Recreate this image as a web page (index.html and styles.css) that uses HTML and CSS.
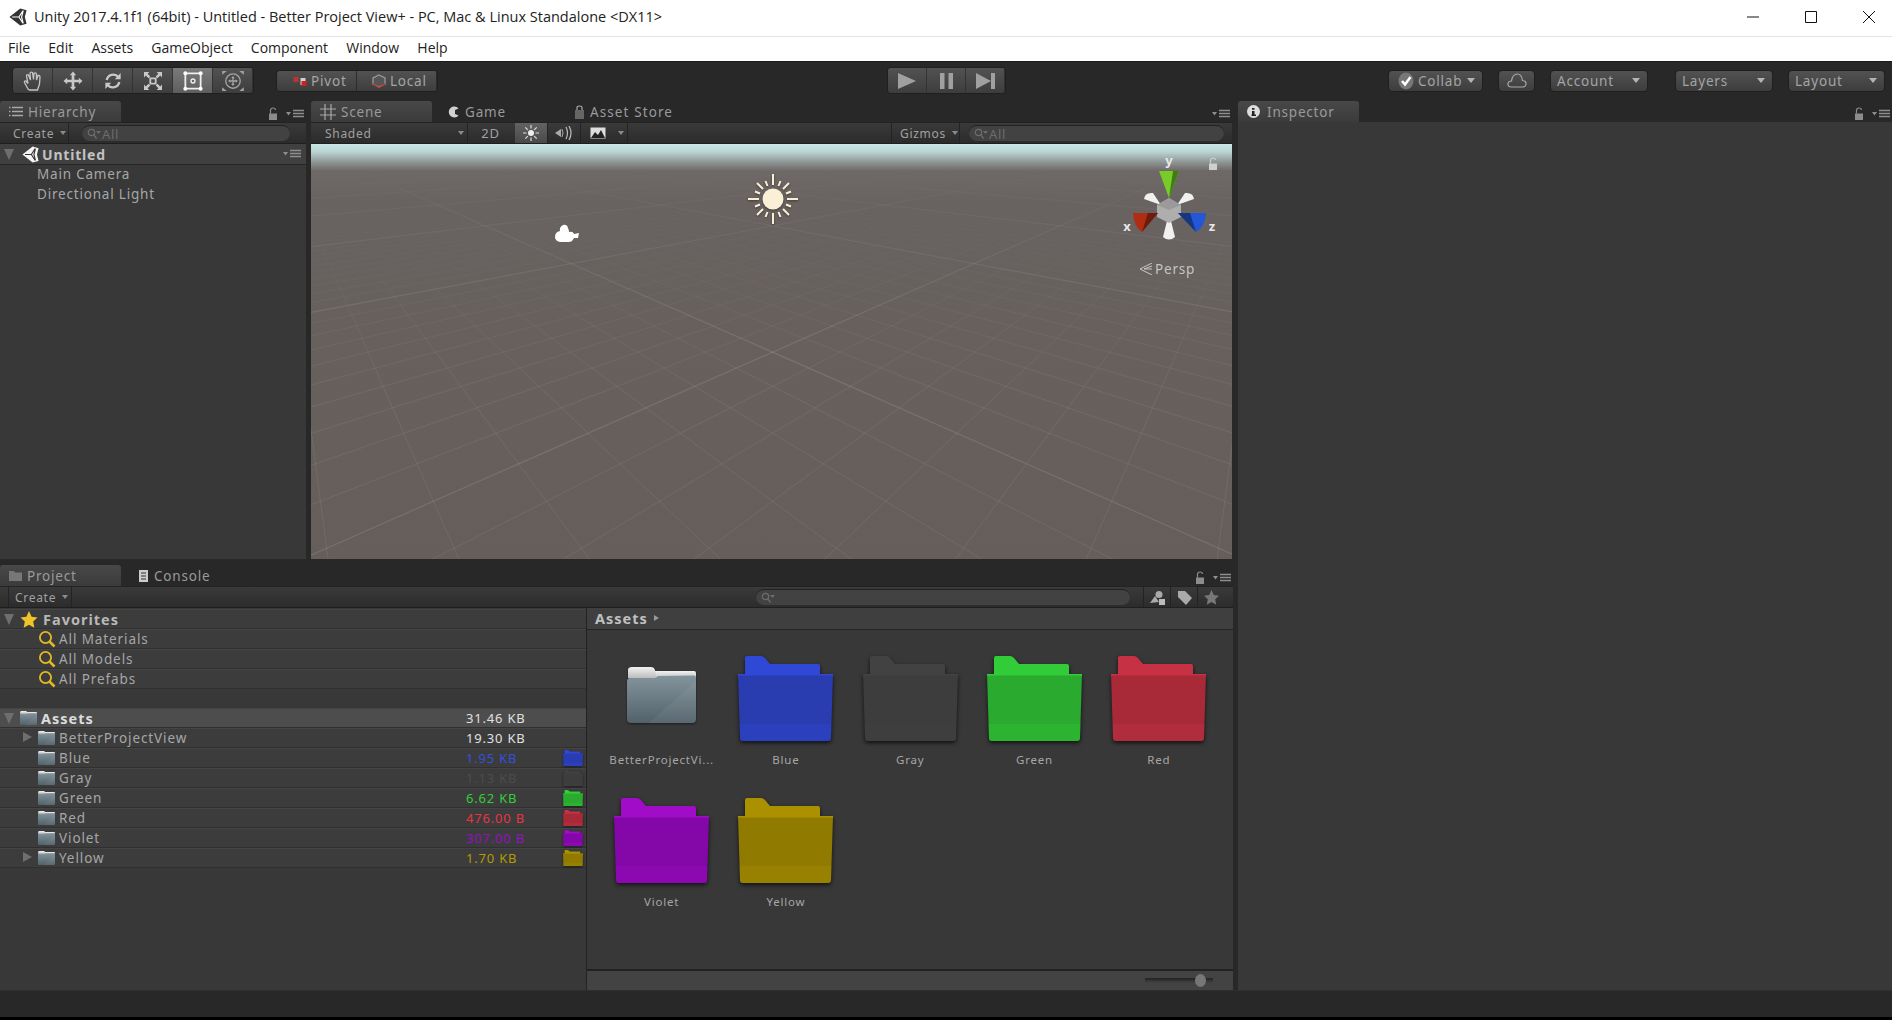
FILE: index.html
```html
<!DOCTYPE html>
<html lang="en">
<head>
    <meta charset="UTF-8">
    <title>Unity 2017.4.1f1 (64bit) - Untitled - Better Project View+</title>
    <link rel="stylesheet" href="styles.css">
</head>
<body>
    <svg class="defs" width="0" height="0">
        <symbol id="unity" viewBox="0 0 20 20">
            <path d="M12.5 0.5 19.5 2.5 17.6 10 19.5 17.5 12.5 19.5 0.5 10z" fill="currentColor"/>
            <path d="M3.5 10H11L15.5 3M11 10l4.5 7M15.8 3 14 10l1.8 7" fill="none" stroke="var(--cut)" stroke-width="1.3"/>
        </symbol>
        <symbol id="folder" viewBox="0 0 95 85" preserveAspectRatio="none">
            <path d="M7 2q0-2 2-2h14q2 0 4 2l5 6h48q2 0 2 2v12H7z" fill="var(--tab)"/>
            <path d="M0 18h95l-2 64q0 3-3 3H5q-3 0-3-3z" fill="currentColor"/>
            <path d="M0 18h95v1.500H0z" fill="var(--tab)"/>
            <path d="M1.600 68h91.800l-.4 14q0 3-3 3H5q-3 0-3-3z" fill="var(--tab)" opacity=".3"/>
        </symbol>
        <linearGradient id="greyBody" x1="0" y1="0" x2="0" y2="1">
            <stop offset="0" stop-color="#84949c"/>
            <stop offset="1" stop-color="#52626a"/>
        </linearGradient>
        <linearGradient id="greyTab" x1="0" y1="0" x2="0" y2="1">
            <stop offset="0" stop-color="#f2f2f2"/>
            <stop offset="1" stop-color="#bcbcbc"/>
        </linearGradient>
        <symbol id="greyfolder" viewBox="0 0 69 56">
            <path d="M2 4h65q2 0 2 2v6H2z" fill="url(#greyTab)"/>
            <path d="M1 3q0-3 4-3h19q3 0 4 3l1 5q0 3-3 3H1z" fill="url(#greyTab)"/>
            <path d="M0 14q0-2 2-3h25q2 0 4-2l36-.4q2 0 2 3V52q0 4-4 4H4q-4 0-4-4z" fill="url(#greyBody)"/>
            <path d="M22 56 69 14v38q0 4-4 4z" fill="#fff" opacity=".05"/>
        </symbol>
        <symbol id="lens" viewBox="0 0 18 18">
            <circle cx="7.500" cy="7.500" r="5.600" fill="none" stroke="#e4bb24" stroke-width="1.800"/>
            <path d="M11.600 11.600 16.500 16.500" stroke="#e4bb24" stroke-width="2.600"/>
        </symbol>
        <symbol id="lock" viewBox="0 0 10 14">
            <path d="M1 6.500h8V13H1z" fill="currentColor"/>
            <path d="M2.500 6.500V3.500Q2.500 1 5 1t2.500 2" fill="none" stroke="currentColor" stroke-width="1.200"/>
        </symbol>
        <symbol id="panelmenu" viewBox="0 0 18 10">
            <path d="M0 3h5L2.500 6.500z" fill="currentColor"/>
            <path d="M7 1.500h11M7 4.500h11M7 7.500h11" stroke="currentColor" stroke-width="1.600"/>
        </symbol>
        <symbol id="glass" viewBox="0 0 14 12">
            <circle cx="4.500" cy="4.500" r="3.200" fill="none" stroke="currentColor" stroke-width="1.200"/>
            <path d="M6.800 6.800 9.500 10.500" stroke="currentColor" stroke-width="1.400"/>
            <path d="M9 3h5l-2.500 3z" fill="currentColor"/>
        </symbol>
    </svg>

    <header class="titlebar">
        <svg class="title-logo"><use href="#unity"/></svg>
        <span class="title-text">Unity 2017.4.1f1 (64bit) - Untitled - Better Project View+ - PC, Mac &amp; Linux Standalone &lt;DX11&gt;</span>
        <div class="win-btns">
            <svg width="12" height="12" viewBox="0 0 12 12"><path d="M0 6h12" stroke="#111"/></svg>
            <svg width="12" height="12" viewBox="0 0 12 12"><path d="M.5.500h11v11H.5z" fill="none" stroke="#111"/></svg>
            <svg width="12" height="12" viewBox="0 0 12 12"><path d="M0 0l12 12M12 0 0 12" stroke="#111"/></svg>
        </div>
    </header>

    <nav class="menubar">
        <span>File</span><span>Edit</span><span>Assets</span><span>GameObject</span><span>Component</span><span>Window</span><span>Help</span>
    </nav>

    <div class="toolbar">
        <div class="btn-group tools">
            <button class="tool"><svg width="24" height="24" viewBox="0 0 24 24"><path d="M7 20 3.500 13.500Q3 11.500 5 12l2 2.500L5.500 7Q5.500 5 7.300 5.800L9.500 11 9 4.500Q9.500 2.500 11.500 3.500L12.500 10.500 13 4.500Q14.500 3 15.500 5L15.500 11 17 6.500Q18.800 6 19 8L18.500 15 16.500 21H8.500z" fill="none" stroke="#c4c4c4" stroke-width="1.300"/></svg></button>
            <button class="tool"><svg width="24" height="24" viewBox="0 0 24 24"><path d="M12 1.500 15.500 5.500H13.500V10.500H18.500V8.500L22.500 12 18.500 15.500V13.500H13.500V18.500H15.500L12 22.500 8.500 18.500H10.500V13.500H5.500V15.500L1.500 12 5.500 8.500V10.500H10.500V5.500H8.500z" fill="#c8c8c8"/></svg></button>
            <button class="tool"><svg width="24" height="24" viewBox="0 0 24 24"><path d="M5 11A7.500 7.500 0 0 1 18 7.500M19 13A7.500 7.500 0 0 1 6 16.500" fill="none" stroke="#c8c8c8" stroke-width="2.600"/><path d="M20.500 3V10H14zM3.500 21V14H10z" fill="#c8c8c8"/></svg></button>
            <button class="tool"><svg width="24" height="24" viewBox="0 0 24 24"><path d="M9 9h6v6H9z" fill="none" stroke="#c8c8c8" stroke-width="2"/><path d="M2 2h6L6 4l3 3-2 2-3-3-2 2zM22 2v6l-2-2-3 3-2-2 3-3-2-2zM2 22v-6l2 2 3-3 2 2-3 3 2 2zM22 22h-6l2-2-3-3 2-2 3 3 2-2z" fill="#c8c8c8"/></svg></button>
            <button class="tool tool-on"><svg width="24" height="24" viewBox="0 0 24 24"><path d="M3.500 3.500h17v17h-17z" fill="none" stroke="#eee" stroke-width="2"/><circle cx="3.500" cy="3.500" r="2.200" fill="#fff"/><circle cx="20.500" cy="3.500" r="2.200" fill="#fff"/><circle cx="3.500" cy="20.500" r="2.200" fill="#fff"/><circle cx="20.500" cy="20.500" r="2.200" fill="#fff"/><circle cx="12" cy="12" r="2.200" fill="none" stroke="#eee" stroke-width="1.500"/></svg></button>
            <button class="tool"><svg width="26" height="24" viewBox="0 0 26 24"><circle cx="13" cy="12" r="8" fill="none" stroke="#a4a4a4" stroke-width="1.500"/><path d="M13 6.500 15 9h-1.300v2.300H16V10l2.500 2-2.500 2v-1.300h-2.300V15H15l-2 2.500L11 15h1.300v-2.300H10V14l-2.500-2L10 10v1.300h2.300V9H11z" fill="#a4a4a4"/><path d="M1 1h5L1 5zM25 1h-5l5 4zM1 23h5l-5-4zM25 23h-5l5-4z" fill="#a4a4a4"/></svg></button>
        </div>
        <div class="btn-group pivot">
            <button class="pill"><svg width="15" height="12" viewBox="0 0 14 12"><path d="M1 2h5v5H1z" fill="#b33"/><path d="M8 3h5v7H8z" fill="#d0d0d0"/><path d="M9 6h5v5H9z" fill="#c22"/></svg>Pivot</button>
            <button class="pill"><svg width="14" height="14" viewBox="0 0 14 14"><path d="M7 1 13 4v6l-6 3-6-3V4z" fill="#555" stroke="#999" stroke-width="1.300"/><path d="M1 9l6 4 6-4v2l-6 3-6-3z" fill="#b33"/></svg>Local</button>
        </div>
        <div class="btn-group play">
            <button class="play-btn"><svg width="18" height="16" viewBox="0 0 18 16"><path d="M0 0 18 8 0 16z" fill="#a0a0a0"/></svg></button>
            <button class="play-btn"><svg width="13" height="16" viewBox="0 0 13 16"><path d="M0 0h4.500v16H0zM8.500 0H13v16H8.500z" fill="#a0a0a0"/></svg></button>
            <button class="play-btn"><svg width="19" height="16" viewBox="0 0 19 16"><path d="M0 0 15 8 0 16z" fill="#a0a0a0"/><path d="M15 0h4v16h-4z" fill="#a0a0a0"/></svg></button>
        </div>
        <button class="drop collab"><svg width="16" height="18" viewBox="0 0 16 18"><ellipse cx="8" cy="9" rx="7.500" ry="8.500" fill="#777"/><path d="M4 9l3 3.500L12.500 5" fill="none" stroke="#fff" stroke-width="2.500"/></svg><span>Collab</span><i class="arrow"></i></button>
        <button class="drop cloud"><svg width="20" height="15" viewBox="0 0 20 15"><path d="M4.500 14Q.5 14 1 10.500 1.500 8 4.500 8 5.500 1 10.500 1 14.500 1 15.500 7.500 19.500 8 19 11.500 18.500 14 15.500 14z" fill="none" stroke="#aaa" stroke-width="1.200"/></svg></button>
        <button class="drop account"><span>Account</span><i class="arrow"></i></button>
        <button class="drop layers"><span>Layers</span><i class="arrow"></i></button>
        <button class="drop layout"><span>Layout</span><i class="arrow"></i></button>
    </div>

    <main class="workspace">
        <div class="left-col">
            <div class="top-row">
                <section class="hierarchy">
                    <div class="tabs">
                        <div class="tab tab-on">
                            <svg width="14" height="11" viewBox="0 0 14 11"><path d="M3 1.500h11M3 5.500h11M3 9.500h11M0 1.500h1.500M0 5.500h1.500M0 9.500h1.500" stroke="#a8a8a8" stroke-width="1.300"/></svg>Hierarchy
                        </div>
                        <div class="tab-tools">
                            <svg class="ico-lock"><use href="#lock"/></svg>
                            <svg class="ico-menu"><use href="#panelmenu"/></svg>
                        </div>
                    </div>
                    <div class="subbar">
                        <div class="sub-drop create">Create<i class="arrow small"></i></div>
                        <div class="search hier-search"><svg class="glass"><use href="#glass"/></svg>All</div>
                    </div>
                    <div class="scene-head">
                        <i class="tri-down"></i>
                        <svg class="head-logo"><use href="#unity"/></svg>
                        <b>Untitled</b>
                        <svg class="ico-menu head-menu"><use href="#panelmenu"/></svg>
                    </div>
                    <div class="hier-item">Main Camera</div>
                    <div class="hier-item">Directional Light</div>
                </section>

                <section class="scene-panel">
                    <div class="tabs">
                        <div class="tab tab-on">
                            <svg width="16" height="16" viewBox="0 0 16 16"><path d="M5 0v16M11 0v16M0 5h16M0 11h16" stroke="#a8a8a8" stroke-width="1.200"/></svg>Scene
                        </div>
                        <div class="tab game-tab">
                            <svg width="12" height="12" viewBox="0 0 12 12"><path d="M10.500 2.500A5.500 5.500 0 1 0 10.500 9.500L7 8V4z" fill="#d0d0d0"/></svg>Game
                        </div>
                        <div class="tab store-tab">
                            <svg width="11" height="14" viewBox="0 0 11 14"><path d="M1 5h9v9H1z" fill="#666"/><path d="M3 5V2.500Q3 1 5.500 1T8 2.500V5" fill="none" stroke="#aaa" stroke-width="1.200"/></svg>Asset Store
                        </div>
                        <div class="tab-tools">
                            <svg class="ico-menu"><use href="#panelmenu"/></svg>
                        </div>
                    </div>
                    <div class="subbar scene-bar">
                        <div class="sub-drop shaded">Shaded<i class="arrow small"></i></div>
                        <div class="sub-btn two-d">2D</div>
                        <div class="sub-btn sub-on"><svg width="16" height="16" viewBox="0 0 16 16"><circle cx="8" cy="8" r="3" fill="#eee"/><path d="M8 0v3.500M8 12.500V16M0 8h3.500M12.500 8H16M2.300 2.300l2.500 2.500M11.200 11.200l2.500 2.500M2.300 13.700l2.500-2.500M11.200 4.800l2.500-2.500" stroke="#ddd" stroke-width="1.200"/></svg></div>
                        <div class="sub-btn"><svg width="18" height="14" viewBox="0 0 18 14"><path d="M0 7 6 3v8z" fill="#aaa"/><path d="M7 3q2 4 0 8" fill="none" stroke="#aaa"/><path d="M11 1q3 6 0 12M14 0q4 7 0 14" fill="none" stroke="#bbb" stroke-width="1.200"/></svg></div>
                        <div class="sub-btn fx-btn"><svg width="16" height="12" viewBox="0 0 16 12"><path d="M.5.500h15v11H.5z" fill="#ddd"/><path d="M1 11 5 5l3 3 3-5 4 8z" fill="#222"/></svg></div>
                        <div class="sub-btn fx-arrow"><i class="arrow small"></i></div>
                        <div class="sub-drop gizmos">Gizmos<i class="arrow small"></i></div>
                        <div class="search scene-search"><svg class="glass"><use href="#glass"/></svg>All</div>
                    </div>
                    <div class="scene-view">
                        <svg id="sceneGrid" class="scene-grid" viewBox="311 143 921 416">
                            <defs>
                                <linearGradient id="minorFade" gradientUnits="userSpaceOnUse" x1="0" y1="185" x2="0" y2="400">
                                    <stop offset="0" stop-color="#fff" stop-opacity="0"/>
                                    <stop offset=".4" stop-color="#fff" stop-opacity=".02"/>
                                    <stop offset="1" stop-color="#fff" stop-opacity=".07"/>
                                </linearGradient>
                                <linearGradient id="majorFade" gradientUnits="userSpaceOnUse" x1="0" y1="165" x2="0" y2="340">
                                    <stop offset="0" stop-color="#fff" stop-opacity="0"/>
                                    <stop offset=".3" stop-color="#fff" stop-opacity=".04"/>
                                    <stop offset="1" stop-color="#fff" stop-opacity=".11"/>
                                </linearGradient>
                            </defs>
                        </svg>
                        <svg class="sun" width="54" height="54" viewBox="-27 -27 54 54">
                            <circle r="10.500" fill="#fbefd6"/>
                            <g stroke="#fbefd6" stroke-width="2">
                                <path d="M0-14V-25M0 14V25M-14 0H-25M14 0H25"/>
                                <path d="M10-10 16-16M-10-10-16-16M10 10 16 16M-10 10-16 16"/>
                                <path d="M5.500-13 7.500-18M-5.500-13-7.500-18M5.500 13 7.500 18M-5.500 13-7.500 18M13-5.500 18-7.500M-13-5.500-18-7.500M13 5.500 18 7.500M-13 5.500-18 7.500"/>
                            </g>
                        </svg>
                        <svg class="cam" width="26" height="19" viewBox="0 0 26 19"><path d="M6 7Q5 3 9 1 13 0 14 4 15 6 15 8 19 7 20 10L25 9 24 14 20 14 18 17Q17 18 14 18H6Q1 17 1 13 1 8 6 7z" fill="#fff"/></svg>
                        <svg class="gizmo" width="100" height="120" viewBox="1120 144 100 120">
                            <text class="giz-label" x="1169" y="164" text-anchor="middle">y</text>
                            <text class="giz-label" x="1127" y="230" text-anchor="middle">x</text>
                            <text class="giz-label" x="1212" y="230" text-anchor="middle">z</text>
                            <path d="M1144 198Q1145 191 1153 192L1161 204z" fill="#f0f0f0"/>
                            <path d="M1194 198Q1193 191 1185 192L1177 204z" fill="#f0f0f0"/>
                            <path d="M1163 236Q1169 241 1175 236L1170 216H1168z" fill="#f0f0f0"/>
                            <path d="M1169 197 1181 204V216L1169 222 1157 216V204z" fill="#aeaeae"/>
                            <path d="M1169 197 1181 204 1169 209 1157 204z" fill="#9a9a9a"/>
                            <path d="M1159 170H1179L1169 197z" fill="#78cc28"/>
                            <path d="M1173 170H1179L1169 197z" fill="#3f7d14"/>
                            <path d="M1133 212H1158L1142 231Q1134 226 1133 212z" fill="#b02c12"/>
                            <path d="M1148 212H1158L1142 231z" fill="#6d1c0c"/>
                            <path d="M1178 212H1206Q1205 226 1196 231z" fill="#2456d8"/>
                            <path d="M1178 212H1190L1196 231z" fill="#163680"/>
                        </svg>
                        <svg class="gizmo-lock"><use href="#lock"/></svg>
                        <div class="persp">
                            <svg width="13" height="12" viewBox="0 0 13 12"><path d="M13 0 1 6l12 6M13 3 5 6h8" fill="none" stroke="#c8c8c8"/></svg>Persp
                        </div>
                    </div>
                </section>
            </div>

            <section class="project">
                <div class="tabs">
                    <div class="tab tab-on">
                        <svg width="13" height="11" viewBox="0 0 13 11"><path d="M0 1h5l1 1.500h7V11H0z" fill="#777"/></svg>Project
                    </div>
                    <div class="tab console-tab">
                        <svg width="11" height="12" viewBox="0 0 11 12"><path d="M1 0h9v12H1z" fill="#ccc"/><path d="M3 3h5M3 6h5M3 9h5" stroke="#333"/></svg>Console
                    </div>
                    <div class="tab-tools">
                        <svg class="ico-lock"><use href="#lock"/></svg>
                        <svg class="ico-menu"><use href="#panelmenu"/></svg>
                    </div>
                </div>
                <div class="subbar project-bar">
                    <div class="sub-drop proj-create">Create<i class="arrow small"></i></div>
                    <div class="search proj-search"><svg class="glass"><use href="#glass"/></svg></div>
                    <div class="sub-btn filter"><svg width="15" height="15" viewBox="0 0 15 15"><circle cx="9" cy="4.500" r="3.500" fill="#aaa"/><path d="M0 13 5 6l4 6z" fill="#aaa"/><path d="M9 9h6v6H9z" fill="#bbb"/></svg></div>
                    <div class="sub-btn filter"><svg width="15" height="15" viewBox="0 0 15 15"><path d="M1 1h7l7 7-6 7-8-8z" fill="#aaa"/></svg></div>
                    <div class="sub-btn filter"><svg width="15" height="15" viewBox="0 0 15 15"><path d="M7.500 0 9.800 5 15 5.700 11.200 9.300 12.200 14.800 7.500 12.100 2.800 14.800 3.800 9.300 0 5.700 5.200 5z" fill="#777"/></svg></div>
                </div>
                <div class="project-body">
                    <div class="tree">
                        <div class="row row-head">
                            <i class="tri-down"></i>
                            <svg class="star" width="18" height="17" viewBox="0 0 15 15"><path d="M7.500 0 9.800 5 15 5.700 11.200 9.300 12.200 14.800 7.500 12.100 2.800 14.800 3.800 9.300 0 5.700 5.200 5z" fill="#f0c428"/></svg>
                            <b>Favorites</b>
                        </div>
                        <div class="row row-child"><svg class="ico-16"><use href="#lens"/></svg><span>All Materials</span></div>
                        <div class="row row-child"><svg class="ico-16"><use href="#lens"/></svg><span>All Models</span></div>
                        <div class="row row-child"><svg class="ico-16"><use href="#lens"/></svg><span>All Prefabs</span></div>
                        <div class="tree-gap"></div>
                        <div class="row row-head row-assets">
                            <i class="tri-down"></i>
                            <svg class="ico-folder"><use href="#greyfolder"/></svg>
                            <b class="name">Assets</b>
                            <span class="size size-hi">31.46 KB</span>
                            <span class="swatch"></span>
                        </div>
                        <div class="row row-child">
                            <i class="tri-right"></i>
                            <svg class="ico-folder"><use href="#greyfolder"/></svg>
                            <span class="name">BetterProjectView</span>
                            <span class="size size-hi">19.30 KB</span>
                            <span class="swatch"></span>
                        </div>
                        <div class="row row-child blue">
                            <svg class="ico-folder"><use href="#greyfolder"/></svg>
                            <span class="name">Blue</span>
                            <span class="size">1.95 KB</span>
                            <svg class="swatch"><use href="#folder"/></svg>
                        </div>
                        <div class="row row-child gray">
                            <svg class="ico-folder"><use href="#greyfolder"/></svg>
                            <span class="name">Gray</span>
                            <span class="size">1.13 KB</span>
                            <svg class="swatch"><use href="#folder"/></svg>
                        </div>
                        <div class="row row-child green">
                            <svg class="ico-folder"><use href="#greyfolder"/></svg>
                            <span class="name">Green</span>
                            <span class="size">6.62 KB</span>
                            <svg class="swatch"><use href="#folder"/></svg>
                        </div>
                        <div class="row row-child red">
                            <svg class="ico-folder"><use href="#greyfolder"/></svg>
                            <span class="name">Red</span>
                            <span class="size">476.00 B</span>
                            <svg class="swatch"><use href="#folder"/></svg>
                        </div>
                        <div class="row row-child violet">
                            <svg class="ico-folder"><use href="#greyfolder"/></svg>
                            <span class="name">Violet</span>
                            <span class="size">307.00 B</span>
                            <svg class="swatch"><use href="#folder"/></svg>
                        </div>
                        <div class="row row-child yellow">
                            <i class="tri-right"></i>
                            <svg class="ico-folder"><use href="#greyfolder"/></svg>
                            <span class="name">Yellow</span>
                            <span class="size">1.70 KB</span>
                            <svg class="swatch"><use href="#folder"/></svg>
                        </div>
                    </div>
                    <div class="browser">
                        <div class="crumb"><b>Assets</b><i class="tri-crumb"></i></div>
                        <div class="asset-grid">
                            <div class="asset"><svg class="asset-grey"><use href="#greyfolder"/></svg><span>BetterProjectVi...</span></div>
                            <div class="asset blue"><svg class="asset-icon"><use href="#folder"/></svg><span>Blue</span></div>
                            <div class="asset gray"><svg class="asset-icon"><use href="#folder"/></svg><span>Gray</span></div>
                            <div class="asset green"><svg class="asset-icon"><use href="#folder"/></svg><span>Green</span></div>
                            <div class="asset red"><svg class="asset-icon"><use href="#folder"/></svg><span>Red</span></div>
                            <div class="asset violet"><svg class="asset-icon"><use href="#folder"/></svg><span>Violet</span></div>
                            <div class="asset yellow"><svg class="asset-icon"><use href="#folder"/></svg><span>Yellow</span></div>
                        </div>
                        <div class="browser-foot">
                            <div class="slider"><i></i></div>
                        </div>
                    </div>
                </div>
            </section>
        </div>

        <section class="inspector">
            <div class="tabs">
                <div class="tab tab-on inspector-tab">
                    <svg width="13" height="13" viewBox="0 0 13 13"><circle cx="6.500" cy="6.500" r="6.500" fill="#ddd"/><path d="M5 3h2.500v1.800H5zM5 6h2.500v3.500H9V11H4.500V9.500H5z" fill="#222"/></svg>Inspector
                </div>
                <div class="tab-tools">
                    <svg class="ico-lock"><use href="#lock"/></svg>
                    <svg class="ico-menu"><use href="#panelmenu"/></svg>
                </div>
            </div>
        </section>
    </main>

    <footer class="statusbar"></footer>

    <script src="grid.js"></script>
</body>
</html>
```

FILE: styles.css
```css
* {
    box-sizing: border-box;
}
html, body {
    margin: 0;
    height: 1020px;
    overflow: hidden;
}
body {
    display: flex;
    flex-direction: column;
    background: #000;
    font-family: "Noto Sans", sans-serif;
    font-size: 13.5px;
    color: #a6a6a6;
    letter-spacing: .8px;
}
svg {
    display: block;
    flex: none;
}
.defs {
    position: absolute;
}
i {
    display: block;
    flex: none;
}

/* window chrome */
.titlebar {
    height: 37px;
    background: #fff;
    border-bottom: 1px solid #e4e4e4;
    display: flex;
    align-items: center;
    padding: 0 0 3px 9px;
    color: #222;
    letter-spacing: 0;
}
.title-logo {
    width: 18px;
    height: 18px;
    color: #333;
    --cut: #fff;
}
.title-text {
    margin-left: 7px;
    font-family: "Open Sans", sans-serif;
    font-size: 14.5px;
}
.win-btns {
    margin-left: auto;
    display: flex;
    gap: 46px;
    padding-right: 17px;
}
.menubar {
    height: 24px;
    background: #fff;
    display: flex;
    align-items: center;
    gap: 18.200px;
    padding: 0 0 3px 8px;
    color: #222;
    font-family: "Open Sans", sans-serif;
    font-size: 14px;
    letter-spacing: 0;
}

/* main toolbar */
.toolbar {
    height: 40px;
    background: #282828;
    display: flex;
    align-items: center;
    border-top: 1px solid #1a1a1a;
    padding-bottom: 2px;
}
button {
    font: inherit;
    color: #a4a4a4;
    letter-spacing: inherit;
    border: 0;
    padding: 0;
    background: linear-gradient(#525252, #3d3d3d);
    display: flex;
    align-items: center;
    justify-content: center;
}
.btn-group {
    display: flex;
    border: 1px solid #1f1f1f;
    border-radius: 4px;
    overflow: hidden;
}
.tools {
    margin-left: 12px;
    height: 27px;
}
.tool {
    width: 40px;
    border-right: 1px solid #333;
}
.tool svg {
    transform: scale(.9);
}
.tool:first-child svg {
    transform: none;
}
.tool-on {
    background: linear-gradient(#7a7a7a, #5e5e5e);
}
.pivot {
    margin-left: 22px;
    height: 22px;
}
.pill {
    width: 80px;
    gap: 4px;
    justify-content: flex-start;
    padding-left: 15px;
    border-right: 1px solid #2c2c2c;
}
.play {
    margin-left: 449px;
    height: 27px;
}
.play-btn {
    width: 39px;
    border-right: 1px solid #333;
}
.drop {
    height: 22px;
    border: 1px solid #1f1f1f;
    border-radius: 4px;
    justify-content: flex-start;
    padding-left: 6px;
}
.drop .arrow {
    margin-left: auto;
    margin-right: 7px;
}
.collab {
    margin-left: auto;
    width: 95px;
    gap: 4px;
    padding-left: 9px;
}
.cloud {
    width: 37px;
    margin-left: 15px;
    justify-content: center;
    padding: 0;
}
.account {
    width: 98px;
    margin-left: 15px;
}
.layers {
    width: 98px;
    margin-left: 27px;
}
.layout {
    width: 97px;
    margin-left: 15px;
    margin-right: 7px;
}
.arrow {
    width: 0;
    height: 0;
    border-left: 4px solid transparent;
    border-right: 4px solid transparent;
    border-top: 5px solid #b4b4b4;
}
.arrow.small {
    border-left-width: 3px;
    border-right-width: 3px;
    border-top: 4px solid #8a8a8a;
}

/* panels */
.workspace {
    height: 889px;
    display: flex;
    background: #282828;
}
.left-col {
    width: 1233px;
    display: flex;
    flex-direction: column;
}
.top-row {
    height: 458px;
    display: flex;
    gap: 5px;
}
.hierarchy {
    width: 306px;
    background: #383838;
}
.scene-panel {
    width: 921px;
    display: flex;
    flex-direction: column;
}
.project {
    margin-top: 6px;
    height: 425px;
    display: flex;
    flex-direction: column;
}
.inspector {
    margin-left: 5px;
    flex: 1;
    background: #383838;
}
.tabs {
    height: 21px;
    background: #282828;
    display: flex;
    align-items: flex-end;
    color: #9a9a9a;
}
.tab {
    height: 21px;
    width: 121px;
    display: flex;
    align-items: center;
    gap: 5px;
    padding-left: 9px;
}
.tab-on {
    background: linear-gradient(#484848, #3b3b3b);
    border-radius: 3px 3px 0 0;
}
.inspector-tab {
    gap: 7px;
}
.game-tab {
    padding-left: 16px;
    width: 141px;
}
.store-tab {
    width: auto;
    padding-left: 1px;
    letter-spacing: 1.1px;
}
.console-tab {
    padding-left: 17px;
}
.tab-tools {
    margin-left: auto;
    height: 21px;
    display: flex;
    align-items: center;
    gap: 8px;
    padding: 5px 2px 0 0;
}
.ico-lock {
    width: 10px;
    height: 14px;
    color: #8c8c8c;
}
.ico-menu {
    width: 18px;
    height: 10px;
    color: #8e8e8e;
}
.subbar {
    height: 22px;
    background: linear-gradient(#3a3a3a, #2b2b2b);
    border-bottom: 1px solid #1f1f1f;
    border-top: 1px solid #232323;
    display: flex;
    align-items: center;
    font-size: 12px;
    letter-spacing: .7px;
    color: #a0a0a0;
}
.sub-drop {
    height: 100%;
    display: flex;
    align-items: center;
    gap: 6px;
    border-right: 1px solid #232323;
}
.create {
    width: 69px;
    padding-left: 13px;
}
.search {
    height: 16px;
    border-radius: 8px;
    background: #424242;
    border-top: 1px solid #222;
    display: flex;
    align-items: center;
    padding-left: 5px;
    font-size: 13px;
    color: #6c6c6c;
}
.glass {
    width: 14px;
    height: 12px;
    color: #6c6c6c;
    margin-right: 1px;
}
.hier-search {
    width: 208px;
    margin-left: 13px;
}

/* hierarchy tree */
.scene-head {
    height: 21px;
    display: flex;
    align-items: center;
    background: #404040;
    border-bottom: 1px solid #262626;
    color: #c2c2c2;
    font-size: 14px;
}
.tri-down {
    margin-left: 4px;
    width: 0;
    height: 0;
    border-left: 5.5px solid transparent;
    border-right: 5.5px solid transparent;
    border-top: 11px solid #6e6e6e;
}
.head-logo {
    width: 17px;
    height: 17px;
    margin-left: 8px;
    margin-right: 3px;
    color: #f4f4f4;
    --cut: #333;
}
.head-menu {
    margin-left: auto;
    margin-right: 5px;
}
.hier-item {
    height: 20px;
    line-height: 19px;
    padding-left: 37px;
}

/* scene view */
.scene-bar {
    padding-left: 1px;
    padding-right: 8px;
}
.shaded {
    width: 156px;
    padding-left: 13px;
}
.shaded .arrow {
    margin-left: auto;
    margin-right: 3px;
}
.sub-btn {
    height: 100%;
    width: 33px;
    display: flex;
    align-items: center;
    justify-content: center;
    border-right: 1px solid #232323;
}
.two-d {
    width: 47px;
    font-size: 13px;
    padding-right: 2px;
    border-right: 0;
}
.sub-on {
    background: linear-gradient(#626262, #4a4a4a);
}
.fx-btn {
    border-right: 0;
}
.fx-arrow {
    width: 14px;
}
.gizmos {
    margin-left: auto;
    width: 69px;
    padding-left: 8px;
    border-left: 1px solid #232323;
    font-size: 12px;
}
.scene-search {
    width: 255px;
    margin-left: 9px;
}
.scene-view {
    position: relative;
    flex: 1;
    overflow: hidden;
    background: linear-gradient(#c9e6e5 0, #b9d3d2 8px, #8b9190 19px, #6e6866 27px, #686260 60px, #655e5a 100%);
}
.scene-grid {
    position: absolute;
    left: 0;
    top: 0;
    width: 100%;
    height: 100%;
}
.sun {
    position: absolute;
    left: 435px;
    top: 28px;
    filter: drop-shadow(0 1px 1px rgba(0, 0, 0, .4));
}
.cam {
    position: absolute;
    left: 243px;
    top: 80px;
}
.gizmo {
    position: absolute;
    left: 809px;
    top: 1px;
}
.giz-label {
    font-size: 13px;
    font-weight: 700;
    fill: #e8e8e8;
    letter-spacing: 0;
}
.gizmo-lock {
    position: absolute;
    left: 897px;
    top: 13px;
    width: 10px;
    height: 14px;
    color: #cfcfcf;
}
.persp {
    position: absolute;
    left: 828px;
    top: 116px;
    display: flex;
    align-items: center;
    gap: 3px;
    color: #c4c4c4;
    font-size: 13.5px;
}

/* project browser */
.project-bar {
    background: linear-gradient(#3a3a3a, #2c2c2c);
}
.proj-create {
    margin-left: 8px;
    width: 64px;
    padding-left: 6px;
    border-left: 1px solid #232323;
}
.proj-search {
    width: 374px;
    margin: 0 13px 0 684px;
}
.filter {
    width: 27px;
    border-left: 1px solid #232323;
    border-right: 0;
}
.project-body {
    flex: 1;
    display: flex;
    background: #383838;
    min-height: 0;
}
.tree {
    width: 587px;
    padding-top: 1px;
    border-right: 1px solid #222;
}
.tree-gap {
    height: 19px;
}
.row {
    height: 20px;
    display: flex;
    align-items: center;
    background: #3c3c3c;
    border-top: 1px solid #444;
    border-bottom: 1px solid #303030;
    padding-right: 3px;
}
.row-head {
    color: #b8b8b8;
    font-size: 14.5px;
    letter-spacing: 1px;
}
.row-head .tri-down {
    margin-right: 6px;
}
.row-assets {
    background: #4d4d4d;
    color: #dcdcdc;
}
.row-child {
    padding-left: 38px;
    position: relative;
    letter-spacing: .9px;
}
.tri-right {
    position: absolute;
    left: 23px;
    top: 3px;
    width: 0;
    height: 0;
    border-top: 5.5px solid transparent;
    border-bottom: 5.5px solid transparent;
    border-left: 9px solid #6e6e6e;
}
.star {
    margin-right: 5px;
}
.ico-16 {
    width: 18px;
    height: 18px;
    margin-right: 3px;
}
.ico-folder {
    width: 17px;
    height: 14px;
    margin-right: 4px;
}
.name {
    flex: 1;
}
.size {
    width: 97px;
    font-size: 13px;
    letter-spacing: .8px;
}
.size-hi {
    color: #e0e0e0;
}
.swatch {
    width: 20px;
    height: 16px;
    filter: drop-shadow(0 1px 1px rgba(0, 0, 0, .5));
}
.blue { color: #2a3db0; --tab: #2f49d6; }
.gray { color: #3d3d3d; --tab: #424242; }
.green { color: #2aaa2e; --tab: #31cc38; }
.red { color: #a82a38; --tab: #c63144; }
.violet { color: #8408a8; --tab: #a00cc8; }
.yellow { color: #907a00; --tab: #ab9100; }
.row.blue .size { color: #3350dc; }
.row.gray .size { color: #4c4c4c; }
.row.green .size { color: #33cc3a; }
.row.red .size { color: #e83445; }
.row.violet .size { color: #9310c4; }
.row.yellow .size { color: #b59a00; }
.row .name {
    color: #a6a6a6;
}
.row-assets .name {
    color: #dcdcdc;
}
.browser {
    flex: 1;
    display: flex;
    flex-direction: column;
    border-left: 1px solid #222;
    margin-left: -1px;
}
.crumb {
    height: 22px;
    display: flex;
    align-items: center;
    gap: 6px;
    padding: 0 0 1px 8px;
    background: #3f3f3f;
    border-bottom: 1px solid #262626;
    color: #c0c0c0;
    font-size: 14.5px;
    letter-spacing: 1px;
}
.tri-crumb {
    width: 0;
    height: 0;
    border-top: 3.5px solid transparent;
    border-bottom: 3.5px solid transparent;
    border-left: 5px solid #999;
}
.asset-grid {
    flex: 1;
    display: grid;
    grid-template-columns: repeat(5, 124.300px);
    grid-auto-rows: 142px;
    align-content: start;
    padding: 26px 0 0 12.500px;
}
.asset {
    display: flex;
    flex-direction: column;
    align-items: center;
}
.asset span {
    margin-top: 11px;
    font-size: 11.5px;
    letter-spacing: .8px;
    color: #a6a6a6;
}
.asset-icon {
    width: 95px;
    height: 85px;
    filter: drop-shadow(0 2px 2px rgba(0, 0, 0, .7));
}
.asset-grey {
    width: 69px;
    height: 56px;
    margin: 11px 0 18px;
    filter: drop-shadow(0 1px 1px rgba(0, 0, 0, .5));
}
.browser-foot {
    height: 21px;
    background: #434343;
    border-top: 2px solid #222;
    display: flex;
    align-items: center;
    justify-content: flex-end;
    padding-right: 20px;
}
.slider {
    position: relative;
    width: 68px;
    height: 5px;
    background: linear-gradient(#222, #444);
}
.slider i {
    position: absolute;
    right: 7px;
    top: -4px;
    width: 11px;
    height: 13px;
    border-radius: 50%;
    background: #777;
}

.statusbar {
    height: 27px;
    background: #282828;
    border-top: 1px solid #2f2f2f;
}
```

FILE: grid.js
```js
// ground plane grid of the scene view, projected with the values read off the reference
const svg = document.getElementById("sceneGrid");
const NS = "http://www.w3.org/2000/svg";

function project(u, v) {
    const w = u + v + 14.86;
    return [772.6 + 502 * (u - v) / w, 131 + 3279 / w];
}

function addLine(a, b, major) {
    const line = document.createElementNS(NS, "line");
    line.setAttribute("x1", a[0]);
    line.setAttribute("y1", a[1]);
    line.setAttribute("x2", b[0]);
    line.setAttribute("y2", b[1] + 0.01);
    line.setAttribute("stroke", major ? "url(#majorFade)" : "url(#minorFade)");
    line.setAttribute("stroke-width", major ? 1.2 : 1);
    svg.appendChild(line);
}

for (let i = -70; i <= 70; i++) {
    const major = i % 10 === 0;
    // start just in front of the camera, end far past the horizon fade
    const near = -14.2 - i;
    addLine(project(i, near), project(i, 400), major);
    addLine(project(near, i), project(400, i), major);
}
```
